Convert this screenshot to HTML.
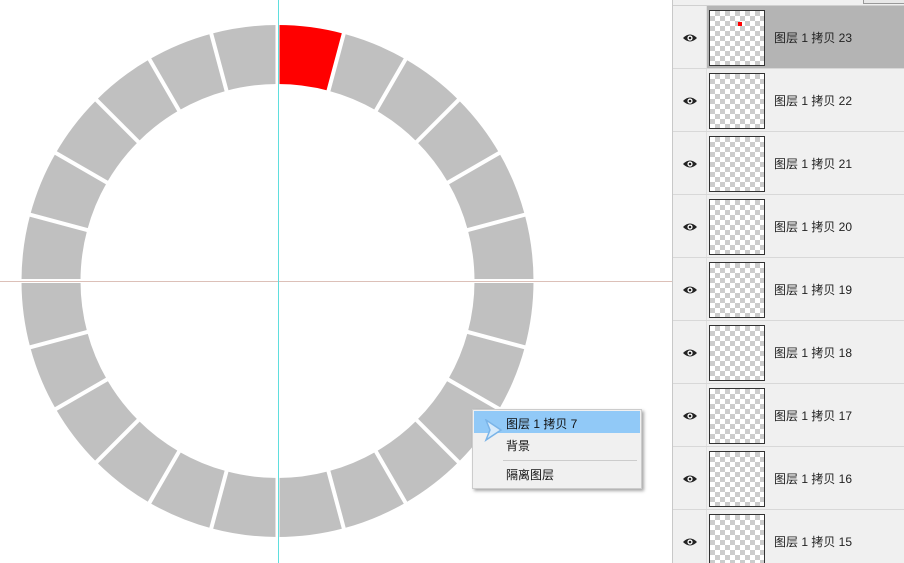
<!DOCTYPE html>
<html><head><meta charset="utf-8"><style>
body{margin:0;width:904px;height:563px;overflow:hidden;background:#fff;position:relative;font-family:"Liberation Sans","Noto Sans CJK SC",sans-serif}
#panel{position:absolute;left:672px;top:0;width:232px;height:563px;background:#f0f0f0;border-left:1px solid #c8c8c8;overflow:hidden}
.row{position:absolute;left:0;width:232px;height:62px;border-bottom:1px solid #d8d8d8}
.row.sel .bg{position:absolute;left:33px;top:0;right:0;bottom:0;background:#b4b4b4}
.eye{position:absolute;left:9px;top:26px}
.vs{position:absolute;left:33px;top:0;width:1px;height:62px;background:#e0e0e0}
.th{position:absolute;left:36px;top:4px;width:54px;height:54px;border:1px solid #333;
background-color:#fff;background-image:linear-gradient(45deg,#ccc 25%,transparent 25%,transparent 75%,#ccc 75%),linear-gradient(45deg,#ccc 25%,transparent 25%,transparent 75%,#ccc 75%);background-size:10px 10px;background-position:0 0,5px 5px}
.tx{position:absolute;left:101px;top:23px;font-size:12px;color:#222;white-space:nowrap}
#menu{position:absolute;left:472px;top:409px;width:168px;height:78px;background:#f0f0f0;border:1px solid #ccc;box-shadow:2px 2px 3px rgba(0,0,0,.35)}
.mi{position:absolute;left:33px;font-size:12px;color:#111}
</style></head><body>
<svg id="ring" width="672" height="563" style="position:absolute;left:0;top:0"></svg>
<div id="panel">
 <div style="position:absolute;left:0;top:0;width:232px;height:5px;border-bottom:1px solid #d0d0d0"></div>
 <div style="position:absolute;left:190px;top:0;width:42px;height:3px;border:1px solid #999;border-top:none;background:#e8e8e8"></div>
</div>
<div id="menu">
 <div style="position:absolute;left:1px;top:1px;width:166px;height:22px;background:#91c9f7"></div>
 <div class="mi" style="top:5px">图层 1 拷贝 7</div>
 <div class="mi" style="top:27px">背景</div>
 <div style="position:absolute;left:30px;top:50px;width:134px;height:1px;background:#ccc"></div>
 <div class="mi" style="top:56px">隔离图层</div>
</div>
<svg width="20" height="24" style="position:absolute;left:484px;top:419px"><path d="M2 1 L17 11 L2 21 L6 11 Z" fill="#d8ebfb" stroke="#7ab4e8" stroke-width="1.5"/></svg>
<script>
var s=document.getElementById('ring'),cx=277.5,cy=281,R=256,r=197,h='';
function p(a,rr){a=(a-90)*Math.PI/180;return (cx+rr*Math.cos(a)).toFixed(2)+' '+(cy+rr*Math.sin(a)).toFixed(2);}
for(var i=0;i<24;i++){var a0=i*15,a1=a0+15;
h+='<path d="M'+p(a0,R)+' A'+R+' '+R+' 0 0 1 '+p(a1,R)+' L'+p(a1,r)+' A'+r+' '+r+' 0 0 0 '+p(a0,r)+'Z" fill="'+(i==0?'#ff0000':'#c0c0c0')+'"/>';}
for(var i=0;i<24;i++){var q1=p(i*15,r-5).split(' '),q2=p(i*15,R+5).split(' ');
h+='<line stroke="#fff" stroke-width="4" x1="'+q1[0]+'" y1="'+q1[1]+'" x2="'+q2[0]+'" y2="'+q2[1]+'"/>';}
h+='<rect x="0" y="281" width="672" height="1" fill="#dcc0b8"/>';
h+='<rect x="278" y="0" width="1" height="563" fill="#5fdede"/>';
s.innerHTML=h;
var pn=document.getElementById('panel'),n=23;
for(var k=0;k<9;k++){var d=document.createElement('div');d.className='row'+(k==0?' sel':'');d.style.top=(6+k*63)+'px';
d.innerHTML=(k==0?'<div class="bg"></div>':'')+'<div class="vs"></div><svg class="eye" width="16" height="12"><path d="M1 6 Q8 -1 15 6 Q8 13 1 6Z" fill="#222"/><circle cx="8" cy="6" r="2.6" fill="#fff"/><circle cx="8" cy="6" r="1.3" fill="#222"/></svg><div class="th">'+(k==0?'<div style="position:absolute;left:28px;top:11px;width:4px;height:4px;background:red"></div>':'')+'</div><div class="tx">图层 1 拷贝 '+(n-k)+'</div>';
pn.appendChild(d);}
</script>
</body></html>
